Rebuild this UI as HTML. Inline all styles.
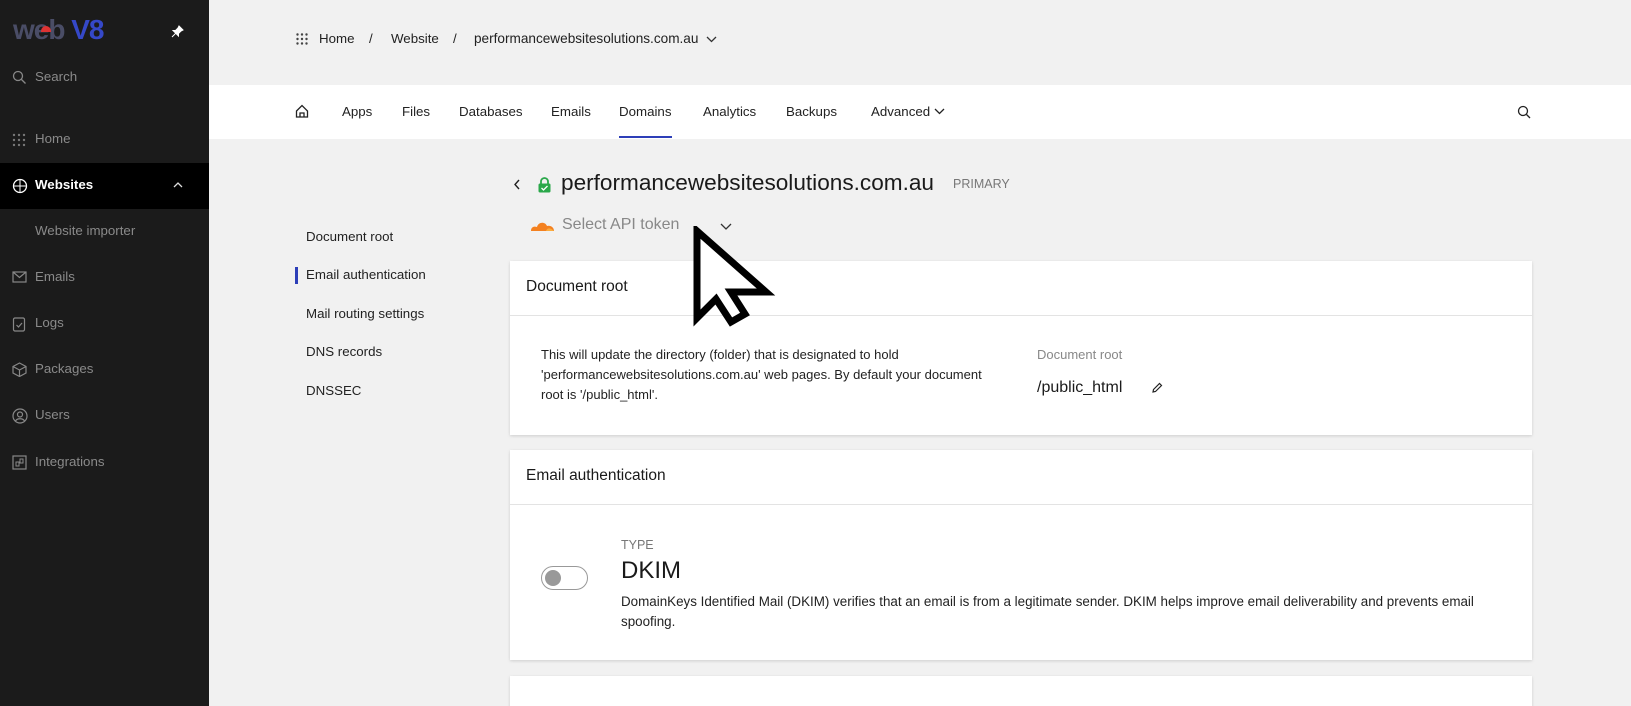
<!DOCTYPE html>
<html><head><meta charset="utf-8"><style>
*{box-sizing:border-box;margin:0;padding:0}
html,body{width:1631px;height:706px;overflow:hidden}
body{background:#f1f1f1;font-family:"Liberation Sans",sans-serif;position:relative;color:#222}
.a{position:absolute;white-space:nowrap}
#sb{position:absolute;left:0;top:0;width:209px;height:706px;background:#1b1b1b}
.si{position:absolute;left:35px;font-size:13.3px;color:#8a8a8a}
.ic{position:absolute;left:12px}
.nav{font-size:13.3px;color:#222;top:104px}
.card{position:absolute;left:510px;width:1022px;background:#fff;box-shadow:0 1px 3px rgba(0,0,0,.15)}
.card .h{height:55px;border-bottom:1px solid #e3e3e3;padding:17px 16px;font-size:15.5px;color:#1a1a1a}
.lm{font-size:13.3px;color:#222;left:306px}
</style></head><body>
<div id="sb">
 <div class="a" style="left:13px;top:14px;font-size:28px;font-weight:bold;letter-spacing:-1px;color:#4a4d66">web <span style="color:#3548c8">V8</span></div>
 <div class="a" style="left:41px;top:26px;width:10px;height:6px;background:#d33;border-radius:5px 5px 0 0"></div>
 <svg class="a" style="left:171px;top:25px" width="13" height="13"><path d="M8 1L12 5L10 6L7.5 8.5L7.5 11L2 5.5L4.5 5.5L7 3Z M4.5 8.5L1 12" fill="#fff" stroke="#fff" stroke-width="1"/></svg>
 <svg class="ic" style="top:70px" width="15" height="15" viewBox="0 0 15 15"><circle cx="6" cy="6" r="4.5" fill="none" stroke="#888" stroke-width="1.3"/><path d="M9.5 9.5L13.5 13.5" stroke="#888" stroke-width="1.3"/></svg>
 <div class="si" style="top:69px">Search</div>
 <svg class="ic" style="top:133px" width="14" height="14"><g fill="#777"><circle cx="2" cy="2" r="1.2"/><circle cx="7" cy="2" r="1.2"/><circle cx="12" cy="2" r="1.2"/><circle cx="2" cy="7" r="1.2"/><circle cx="7" cy="7" r="1.2"/><circle cx="12" cy="7" r="1.2"/><circle cx="2" cy="12" r="1.2"/><circle cx="7" cy="12" r="1.2"/><circle cx="12" cy="12" r="1.2"/></g></svg>
 <div class="si" style="top:131px">Home</div>
 <div class="a" style="left:0;top:163px;width:209px;height:46px;background:#000"></div>
 <svg class="ic" style="top:178px" width="16" height="16"><circle cx="8" cy="8" r="6.5" fill="none" stroke="#fff" stroke-width="1.3"/><path d="M1.5 8H14.5M8 1.5V14.5" stroke="#fff" stroke-width="1"/></svg>
 <div class="si" style="top:177px;color:#fff;font-weight:bold">Websites</div>
 <svg class="a" style="left:173px;top:181px" width="10" height="7"><path d="M1 6L5 2L9 6" fill="none" stroke="#ddd" stroke-width="1.3"/></svg>
 <div class="si" style="top:223px">Website importer</div>
 <svg class="ic" style="top:271px" width="15" height="12"><rect x="1" y="1" width="13" height="10" fill="none" stroke="#888" stroke-width="1.2"/><path d="M1 1L7.5 6.5L14 1" fill="none" stroke="#888" stroke-width="1.2"/></svg>
 <div class="si" style="top:269px">Emails</div>
 <svg class="ic" style="top:316px" width="14" height="16"><rect x="1.5" y="2" width="11" height="13" rx="1.5" fill="none" stroke="#888" stroke-width="1.2"/><path d="M4.5 9L6.5 11L10 7" fill="none" stroke="#888" stroke-width="1.2"/></svg>
 <div class="si" style="top:315px">Logs</div>
 <svg class="ic" style="top:362px" width="15" height="15"><path d="M7.5 1L14 4.5V11L7.5 14.5L1 11V4.5Z M1 4.5L7.5 8L14 4.5 M7.5 8V14.5" fill="none" stroke="#888" stroke-width="1.2"/></svg>
 <div class="si" style="top:361px">Packages</div>
 <svg class="ic" style="top:408px" width="16" height="16"><circle cx="8" cy="8" r="7" fill="none" stroke="#888" stroke-width="1.2"/><circle cx="8" cy="6.5" r="2.5" fill="none" stroke="#888" stroke-width="1.2"/><path d="M3.5 13C5 10 11 10 12.5 13" fill="none" stroke="#888" stroke-width="1.2"/></svg>
 <div class="si" style="top:407px">Users</div>
 <svg class="ic" style="top:455px" width="15" height="15"><rect x="1" y="1" width="13" height="13" fill="none" stroke="#888" stroke-width="1.2"/><rect x="4" y="7" width="3" height="4" fill="none" stroke="#888"/><rect x="8" y="4" width="3" height="4" fill="none" stroke="#888"/></svg>
 <div class="si" style="top:454px">Integrations</div>
</div>

<svg class="a" style="left:296px;top:33px" width="12" height="12"><g fill="#444"><circle cx="1.5" cy="1.5" r="1.2"/><circle cx="6" cy="1.5" r="1.2"/><circle cx="10.5" cy="1.5" r="1.2"/><circle cx="1.5" cy="6" r="1.2"/><circle cx="6" cy="6" r="1.2"/><circle cx="10.5" cy="6" r="1.2"/><circle cx="1.5" cy="10.5" r="1.2"/><circle cx="6" cy="10.5" r="1.2"/><circle cx="10.5" cy="10.5" r="1.2"/></g></svg>
<div class="a" style="left:319px;top:31px;font-size:13.3px;color:#222">Home</div>
<div class="a" style="left:369px;top:31px;font-size:13.3px;color:#222">/</div>
<div class="a" style="left:391px;top:31px;font-size:13.3px;color:#222">Website</div>
<div class="a" style="left:453px;top:31px;font-size:13.3px;color:#222">/</div>
<div class="a" style="left:474px;top:31px;font-size:13.6px;color:#222">performancewebsitesolutions.com.au</div>
<svg class="a" style="left:706px;top:36px" width="11" height="7"><path d="M1 1L5.5 5.5L10 1" fill="none" stroke="#333" stroke-width="1.3"/></svg>

<div class="a" style="left:209px;top:85px;width:1422px;height:54px;background:#fff"></div>
<svg class="a" style="left:295px;top:104px" width="14" height="14"><path d="M1.5 7L7 1.5L12.5 7V13H1.5Z M5 13V9H9V13" fill="none" stroke="#222" stroke-width="1.3"/></svg>
<div class="a nav" style="left:342px">Apps</div>
<div class="a nav" style="left:402px">Files</div>
<div class="a nav" style="left:459px">Databases</div>
<div class="a nav" style="left:551px">Emails</div>
<div class="a nav" style="left:619px">Domains</div>
<div class="a" style="left:619px;top:136px;width:53px;height:2px;background:#2d3fb8"></div>
<div class="a nav" style="left:703px">Analytics</div>
<div class="a nav" style="left:786px">Backups</div>
<div class="a nav" style="left:871px">Advanced</div>
<svg class="a" style="left:934px;top:108px" width="11" height="7"><path d="M1 1L5.5 5.5L10 1" fill="none" stroke="#222" stroke-width="1.3"/></svg>
<svg class="a" style="left:1517px;top:105px" width="14" height="14"><circle cx="6" cy="6" r="4.5" fill="none" stroke="#222" stroke-width="1.3"/><path d="M9.5 9.5L13 13" stroke="#222" stroke-width="1.3"/></svg>

<svg class="a" style="left:513px;top:179px" width="8" height="11"><path d="M6 1L2 5.5L6 10" fill="none" stroke="#222" stroke-width="1.4"/></svg>
<svg class="a" style="left:537px;top:176px" width="15" height="17"><path d="M4 8V5.5A3.5 3.5 0 0 1 11 5.5V8" fill="none" stroke="#2aa84a" stroke-width="1.8"/><rect x="1.5" y="7.5" width="12" height="9" rx="1.5" fill="#2aa84a"/><path d="M4.5 12L6.5 14L10.5 10" fill="none" stroke="#fff" stroke-width="1.3"/></svg>
<div class="a" style="left:561px;top:170px;font-size:22.6px;color:#1a1a1a">performancewebsitesolutions.com.au</div>
<div class="a" style="left:953px;top:177px;font-size:12.5px;color:#777">PRIMARY</div>
<svg class="a" style="left:529px;top:218px" width="26" height="14"><path d="M2 13C2 9 5 8 8 9C9 4 16 3 18 8C21 7 25 9 25 13Z" fill="#f48120"/><path d="M17 13C18 10 21 9 25 13Z" fill="#faad3f"/></svg>
<div class="a" style="left:562px;top:216px;font-size:16px;color:#888">Select API token</div>
<svg class="a" style="left:720px;top:223px" width="12" height="7"><path d="M1 1L6 6L11 1" fill="none" stroke="#333" stroke-width="1.3"/></svg>

<div class="a lm" style="top:229px">Document root</div>
<div class="a" style="left:295px;top:267px;width:3px;height:17px;background:#2d3fb8"></div>
<div class="a lm" style="top:267px">Email authentication</div>
<div class="a lm" style="top:306px">Mail routing settings</div>
<div class="a lm" style="top:344px">DNS records</div>
<div class="a lm" style="top:383px">DNSSEC</div>

<div class="card" style="top:261px;height:174px">
 <div class="h">Document root</div>
 <div class="a" style="left:31px;top:84px;font-size:13px;line-height:20px;color:#222;white-space:normal;width:450px">This will update the directory (folder) that is designated to hold 'performancewebsitesolutions.com.au' web pages. By default your document root is '/public_html'.</div>
 <div class="a" style="left:527px;top:86px;font-size:13px;color:#888">Document root</div>
 <div class="a" style="left:527px;top:118px;font-size:16px;color:#1a1a1a">/public_html</div>
 <svg class="a" style="left:641px;top:121px" width="12" height="12"><path d="M2 10L2.5 7.5L8.5 1.5L10.5 3.5L4.5 9.5Z" fill="none" stroke="#222" stroke-width="1.2"/></svg>
</div>

<div class="card" style="top:450px;height:210px">
 <div class="h">Email authentication</div>
 <div class="a" style="left:31px;top:116px;width:47px;height:24px;border:1.5px solid #999;border-radius:12px"></div>
 <div class="a" style="left:35px;top:120px;width:16px;height:16px;border-radius:50%;background:#999"></div>
 <div class="a" style="left:111px;top:88px;font-size:12.5px;color:#777">TYPE</div>
 <div class="a" style="left:111px;top:107px;font-size:24px;color:#1a1a1a">DKIM</div>
 <div class="a" style="left:111px;top:142px;font-size:13.4px;line-height:20px;color:#222;white-space:normal;width:870px">DomainKeys Identified Mail (DKIM) verifies that an email is from a legitimate sender. DKIM helps improve email deliverability and prevents email spoofing.</div>
</div>
<div class="card" style="top:676px;height:40px"></div>

<svg class="a" style="left:692px;top:226px" width="84" height="102"><path d="M5 5L5 92L24 73L39 96L53 88L39 66L74 66Z" fill="#fff" stroke="#000" stroke-width="7" stroke-linejoin="miter"/></svg>
</body></html>
